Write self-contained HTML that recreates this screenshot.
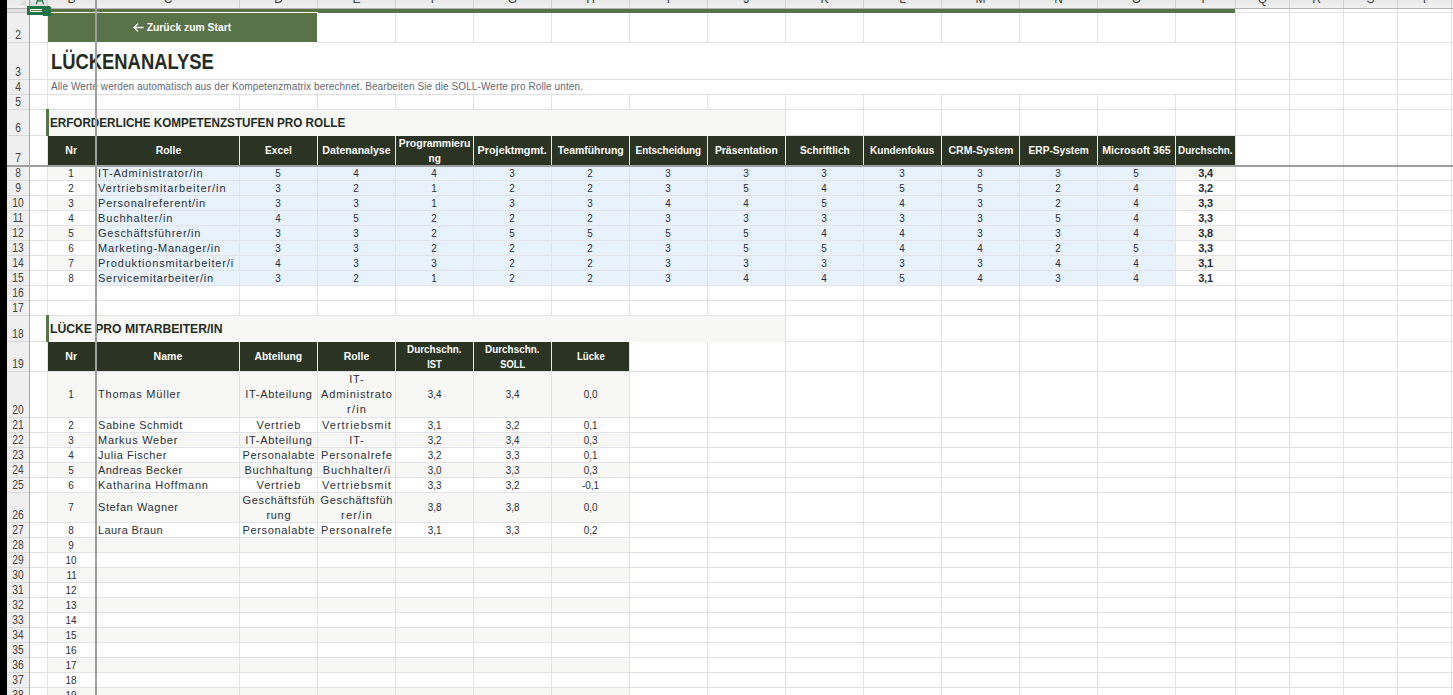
<!DOCTYPE html><html><head><meta charset="utf-8"><title>Lückenanalyse</title><style>
html,body{margin:0;padding:0}
body{width:1453px;height:695px;overflow:hidden;background:#fff;position:relative;font-family:"Liberation Sans",sans-serif}
div{position:absolute;box-sizing:border-box}
.c{display:flex;align-items:center;justify-content:center;overflow:hidden;text-align:center;background:none;white-space:nowrap}
.c p{margin:0;padding:0}
.sx{display:inline-block}
.h{color:#fff;font-weight:bold;font-size:11px;line-height:15px}
.h p{margin-top:-1px}
.h.h2 p{margin-top:0}
.d{color:#2a2f3a;font-size:11px;line-height:15px;letter-spacing:0.7px}
.d.n{letter-spacing:0}
.d.n p{transform:scaleX(0.9)}
.d.l{justify-content:flex-start;text-align:left;padding-left:1px}
.d.b{font-weight:bold;letter-spacing:-0.2px}
.title{justify-content:flex-start;font-weight:bold;font-size:21.5px;color:#252c1f;padding-left:3px;line-height:24px}
.title p{margin-top:1px}
.sub{justify-content:flex-start;font-size:10px;color:#626879;padding-left:3px}
.sub p{margin-top:-1px}
.sec{justify-content:flex-start;font-weight:bold;font-size:12.5px;color:#252c1f;padding-left:1px}
.sec p{margin-top:1px}
.btn{color:#fff;font-weight:bold;font-size:11px}
.btn p{margin-top:-2px;margin-left:-1px}
.cl{top:-8.7px;height:16px;font-size:12px;line-height:16px;text-align:center}
.rl{left:7px;width:22px;height:14px;font-size:12.5px;line-height:14px;text-align:center;color:#444;transform:scaleX(0.82)}
.arr{display:inline-block;vertical-align:-1px;margin-right:3px}
</style></head><body>
<div style="left:47px;top:9px;width:1px;height:686px;background:#e0e0e0;"></div>
<div style="left:239px;top:9px;width:1px;height:686px;background:#e0e0e0;"></div>
<div style="left:317px;top:9px;width:1px;height:686px;background:#e0e0e0;"></div>
<div style="left:395px;top:9px;width:1px;height:686px;background:#e0e0e0;"></div>
<div style="left:473px;top:9px;width:1px;height:686px;background:#e0e0e0;"></div>
<div style="left:551px;top:9px;width:1px;height:686px;background:#e0e0e0;"></div>
<div style="left:629px;top:9px;width:1px;height:686px;background:#e0e0e0;"></div>
<div style="left:707px;top:9px;width:1px;height:686px;background:#e0e0e0;"></div>
<div style="left:785px;top:9px;width:1px;height:686px;background:#e0e0e0;"></div>
<div style="left:863px;top:9px;width:1px;height:686px;background:#e0e0e0;"></div>
<div style="left:941px;top:9px;width:1px;height:686px;background:#e0e0e0;"></div>
<div style="left:1019px;top:9px;width:1px;height:686px;background:#e0e0e0;"></div>
<div style="left:1097px;top:9px;width:1px;height:686px;background:#e0e0e0;"></div>
<div style="left:1175px;top:9px;width:1px;height:686px;background:#e0e0e0;"></div>
<div style="left:1235px;top:9px;width:1px;height:686px;background:#e0e0e0;"></div>
<div style="left:1289px;top:9px;width:1px;height:686px;background:#e0e0e0;"></div>
<div style="left:1343px;top:9px;width:1px;height:686px;background:#e0e0e0;"></div>
<div style="left:1397px;top:9px;width:1px;height:686px;background:#e0e0e0;"></div>
<div style="left:1451px;top:9px;width:1px;height:686px;background:#e0e0e0;"></div>
<div style="left:30px;top:12px;width:1423px;height:1px;background:#e0e0e0;"></div>
<div style="left:30px;top:42px;width:1423px;height:1px;background:#e0e0e0;"></div>
<div style="left:30px;top:79px;width:1423px;height:1px;background:#e0e0e0;"></div>
<div style="left:30px;top:94px;width:1423px;height:1px;background:#e0e0e0;"></div>
<div style="left:30px;top:109px;width:1423px;height:1px;background:#e0e0e0;"></div>
<div style="left:30px;top:135px;width:1423px;height:1px;background:#e0e0e0;"></div>
<div style="left:30px;top:180px;width:1423px;height:1px;background:#e0e0e0;"></div>
<div style="left:30px;top:195px;width:1423px;height:1px;background:#e0e0e0;"></div>
<div style="left:30px;top:210px;width:1423px;height:1px;background:#e0e0e0;"></div>
<div style="left:30px;top:225px;width:1423px;height:1px;background:#e0e0e0;"></div>
<div style="left:30px;top:240px;width:1423px;height:1px;background:#e0e0e0;"></div>
<div style="left:30px;top:255px;width:1423px;height:1px;background:#e0e0e0;"></div>
<div style="left:30px;top:270px;width:1423px;height:1px;background:#e0e0e0;"></div>
<div style="left:30px;top:285px;width:1423px;height:1px;background:#e0e0e0;"></div>
<div style="left:30px;top:300px;width:1423px;height:1px;background:#e0e0e0;"></div>
<div style="left:30px;top:315px;width:1423px;height:1px;background:#e0e0e0;"></div>
<div style="left:30px;top:341px;width:1423px;height:1px;background:#e0e0e0;"></div>
<div style="left:30px;top:371px;width:1423px;height:1px;background:#e0e0e0;"></div>
<div style="left:30px;top:417px;width:1423px;height:1px;background:#e0e0e0;"></div>
<div style="left:30px;top:432px;width:1423px;height:1px;background:#e0e0e0;"></div>
<div style="left:30px;top:447px;width:1423px;height:1px;background:#e0e0e0;"></div>
<div style="left:30px;top:462px;width:1423px;height:1px;background:#e0e0e0;"></div>
<div style="left:30px;top:477px;width:1423px;height:1px;background:#e0e0e0;"></div>
<div style="left:30px;top:492px;width:1423px;height:1px;background:#e0e0e0;"></div>
<div style="left:30px;top:522px;width:1423px;height:1px;background:#e0e0e0;"></div>
<div style="left:30px;top:537px;width:1423px;height:1px;background:#e0e0e0;"></div>
<div style="left:30px;top:552px;width:1423px;height:1px;background:#e0e0e0;"></div>
<div style="left:30px;top:567px;width:1423px;height:1px;background:#e0e0e0;"></div>
<div style="left:30px;top:582px;width:1423px;height:1px;background:#e0e0e0;"></div>
<div style="left:30px;top:597px;width:1423px;height:1px;background:#e0e0e0;"></div>
<div style="left:30px;top:612px;width:1423px;height:1px;background:#e0e0e0;"></div>
<div style="left:30px;top:627px;width:1423px;height:1px;background:#e0e0e0;"></div>
<div style="left:30px;top:642px;width:1423px;height:1px;background:#e0e0e0;"></div>
<div style="left:30px;top:657px;width:1423px;height:1px;background:#e0e0e0;"></div>
<div style="left:30px;top:672px;width:1423px;height:1px;background:#e0e0e0;"></div>
<div style="left:30px;top:687px;width:1423px;height:1px;background:#e0e0e0;"></div>
<div style="left:30px;top:702px;width:1423px;height:1px;background:#e0e0e0;"></div>
<div style="left:48px;top:43px;width:1187px;height:36px;background:#fff;"></div>
<div style="left:48px;top:80px;width:1187px;height:14px;background:#fff;"></div>
<div style="left:48px;top:9px;width:1187px;height:4px;background:#5a7247;"></div>
<div style="left:48px;top:12px;width:270px;height:1px;background:#fcfcfc;"></div>
<div style="left:317px;top:12px;width:1px;height:31px;background:#f8f8f8;"></div>
<div style="left:48px;top:42px;width:269px;height:1px;background:#fcfcfc;"></div>
<div style="left:48px;top:13px;width:269px;height:29px;background:#5a7247;"></div>
<div style="left:46px;top:109px;width:3px;height:27px;background:#5a7247;"></div>
<div style="left:49px;top:110px;width:736px;height:26px;background:#f7f7f5;"></div>
<div style="left:46px;top:315px;width:3px;height:27px;background:#5a7247;"></div>
<div style="left:49px;top:316px;width:736px;height:26px;background:#f7f7f5;"></div>
<div style="left:48px;top:136px;width:1187px;height:29px;background:#2b3423;"></div>
<div class="c h" style="left:48px;top:136px;width:47px;height:29px;"><p><span class="sx" style="transform:scaleX(0.9645);margin:0 -0.22px">Nr</span></p></div>
<div style="left:239px;top:136px;width:1px;height:29px;background:#e6e8e4;"></div>
<div class="c h" style="left:97px;top:136px;width:142px;height:29px;"><p><span class="sx" style="transform:scaleX(0.9477);margin:0 -0.70px">Rolle</span></p></div>
<div style="left:317px;top:136px;width:1px;height:29px;background:#e6e8e4;"></div>
<div class="c h" style="left:240px;top:136px;width:77px;height:29px;"><p><span class="sx" style="transform:scaleX(0.9287);margin:0 -1.03px">Excel</span></p></div>
<div style="left:395px;top:136px;width:1px;height:29px;background:#e6e8e4;"></div>
<div class="c h" style="left:318px;top:136px;width:77px;height:29px;"><p><span class="sx" style="transform:scaleX(0.9614);margin:0 -1.37px">Datenanalyse</span></p></div>
<div style="left:473px;top:136px;width:1px;height:29px;background:#e6e8e4;"></div>
<div class="c h h2" style="left:396px;top:136px;width:77px;height:29px;"><p><span class="sx" style="transform:scaleX(0.9521);margin:0 -1.80px">Programmieru</span><br><span class="sx" style="transform:scaleX(0.9143);margin:0 -0.58px">ng</span></p></div>
<div style="left:551px;top:136px;width:1px;height:29px;background:#e6e8e4;"></div>
<div class="c h" style="left:474px;top:136px;width:77px;height:29px;"><p><span class="sx" style="transform:scaleX(0.9830);margin:0 -0.60px">Projektmgmt.</span></p></div>
<div style="left:629px;top:136px;width:1px;height:29px;background:#e6e8e4;"></div>
<div class="c h" style="left:552px;top:136px;width:77px;height:29px;"><p><span class="sx" style="transform:scaleX(0.9501);margin:0 -1.73px">Teamführung</span></p></div>
<div style="left:707px;top:136px;width:1px;height:29px;background:#e6e8e4;"></div>
<div class="c h" style="left:630px;top:136px;width:77px;height:29px;"><p><span class="sx" style="transform:scaleX(0.9005);margin:0 -3.62px">Entscheidung</span></p></div>
<div style="left:785px;top:136px;width:1px;height:29px;background:#e6e8e4;"></div>
<div class="c h" style="left:708px;top:136px;width:77px;height:29px;"><p><span class="sx" style="transform:scaleX(0.9424);margin:0 -1.92px">Präsentation</span></p></div>
<div style="left:863px;top:136px;width:1px;height:29px;background:#e6e8e4;"></div>
<div class="c h" style="left:786px;top:136px;width:77px;height:29px;"><p><span class="sx" style="transform:scaleX(0.9238);margin:0 -2.05px">Schriftlich</span></p></div>
<div style="left:941px;top:136px;width:1px;height:29px;background:#e6e8e4;"></div>
<div class="c h" style="left:864px;top:136px;width:77px;height:29px;"><p><span class="sx" style="transform:scaleX(0.9135);margin:0 -3.04px">Kundenfokus</span></p></div>
<div style="left:1019px;top:136px;width:1px;height:29px;background:#e6e8e4;"></div>
<div class="c h" style="left:942px;top:136px;width:77px;height:29px;"><p><span class="sx" style="transform:scaleX(0.9564);margin:0 -1.48px">CRM-System</span></p></div>
<div style="left:1097px;top:136px;width:1px;height:29px;background:#e6e8e4;"></div>
<div class="c h" style="left:1020px;top:136px;width:77px;height:29px;"><p><span class="sx" style="transform:scaleX(0.9217);margin:0 -2.56px">ERP-System</span></p></div>
<div style="left:1175px;top:136px;width:1px;height:29px;background:#e6e8e4;"></div>
<div class="c h" style="left:1098px;top:136px;width:77px;height:29px;"><p><span class="sx" style="transform:scaleX(0.9659);margin:0 -1.21px">Microsoft 365</span></p></div>
<div class="c h" style="left:1176px;top:136px;width:59px;height:29px;"><p><span class="sx" style="transform:scaleX(0.8989);margin:0 -3.06px">Durchschn.</span></p></div>
<div style="left:48px;top:342px;width:581px;height:29px;background:#2b3423;"></div>
<div class="c h" style="left:48px;top:342px;width:47px;height:29px;"><p><span class="sx" style="transform:scaleX(0.9645);margin:0 -0.22px">Nr</span></p></div>
<div style="left:239px;top:342px;width:1px;height:29px;background:#e6e8e4;"></div>
<div class="c h" style="left:97px;top:342px;width:142px;height:29px;"><p><span class="sx" style="transform:scaleX(0.9610);margin:0 -0.58px">Name</span></p></div>
<div style="left:317px;top:342px;width:1px;height:29px;background:#e6e8e4;"></div>
<div class="c h" style="left:240px;top:342px;width:77px;height:29px;"><p><span class="sx" style="transform:scaleX(0.9385);margin:0 -1.56px">Abteilung</span></p></div>
<div style="left:395px;top:342px;width:1px;height:29px;background:#e6e8e4;"></div>
<div class="c h" style="left:318px;top:342px;width:77px;height:29px;"><p><span class="sx" style="transform:scaleX(0.9477);margin:0 -0.70px">Rolle</span></p></div>
<div style="left:473px;top:342px;width:1px;height:29px;background:#e6e8e4;"></div>
<div class="c h h2" style="left:396px;top:342px;width:77px;height:29px;"><p><span class="sx" style="transform:scaleX(0.8989);margin:0 -3.06px">Durchschn.</span><br><span class="sx" style="transform:scaleX(0.8526);margin:0 -1.26px">IST</span></p></div>
<div style="left:551px;top:342px;width:1px;height:29px;background:#e6e8e4;"></div>
<div class="c h h2" style="left:474px;top:342px;width:77px;height:29px;"><p><span class="sx" style="transform:scaleX(0.8989);margin:0 -3.06px">Durchschn.</span><br><span class="sx" style="transform:scaleX(0.8452);margin:0 -2.27px">SOLL</span></p></div>
<div class="c h" style="left:552px;top:342px;width:77px;height:29px;"><p><span class="sx" style="transform:scaleX(0.8743);margin:0 -2.00px">Lücke</span></p></div>
<div style="left:48px;top:167px;width:47px;height:13px;background:#f7f7f5;"></div>
<div class="c d n" style="left:48px;top:167px;width:47px;height:13px;"><p><span>1</span></p></div>
<div style="left:97px;top:167px;width:1078px;height:13px;background:#e8f2fd;"></div>
<div class="c d l" style="left:97px;top:167px;width:142px;height:13px;"><p><span style="letter-spacing:0.858px;margin-right:-0.858px">IT-Administrator/in</span></p></div>
<div class="c d n" style="left:240px;top:167px;width:77px;height:13px;"><p><span>5</span></p></div>
<div class="c d n" style="left:318px;top:167px;width:77px;height:13px;"><p><span>4</span></p></div>
<div class="c d n" style="left:396px;top:167px;width:77px;height:13px;"><p><span>4</span></p></div>
<div class="c d n" style="left:474px;top:167px;width:77px;height:13px;"><p><span>3</span></p></div>
<div class="c d n" style="left:552px;top:167px;width:77px;height:13px;"><p><span>2</span></p></div>
<div class="c d n" style="left:630px;top:167px;width:77px;height:13px;"><p><span>3</span></p></div>
<div class="c d n" style="left:708px;top:167px;width:77px;height:13px;"><p><span>3</span></p></div>
<div class="c d n" style="left:786px;top:167px;width:77px;height:13px;"><p><span>3</span></p></div>
<div class="c d n" style="left:864px;top:167px;width:77px;height:13px;"><p><span>3</span></p></div>
<div class="c d n" style="left:942px;top:167px;width:77px;height:13px;"><p><span>3</span></p></div>
<div class="c d n" style="left:1020px;top:167px;width:77px;height:13px;"><p><span>3</span></p></div>
<div class="c d n" style="left:1098px;top:167px;width:77px;height:13px;"><p><span>5</span></p></div>
<div style="left:1176px;top:167px;width:59px;height:13px;background:#f7f7f5;"></div>
<div class="c d b" style="left:1176px;top:167px;width:59px;height:13px;"><p><span>3,4</span></p></div>
<div style="left:48px;top:181px;width:47px;height:14px;background:#fff;"></div>
<div class="c d n" style="left:48px;top:181px;width:47px;height:14px;"><p><span>2</span></p></div>
<div style="left:97px;top:181px;width:1078px;height:14px;background:#e8f2fd;"></div>
<div class="c d l" style="left:97px;top:181px;width:142px;height:14px;"><p><span style="letter-spacing:0.936px;margin-right:-0.936px">Vertriebsmitarbeiter/in</span></p></div>
<div class="c d n" style="left:240px;top:181px;width:77px;height:14px;"><p><span>3</span></p></div>
<div class="c d n" style="left:318px;top:181px;width:77px;height:14px;"><p><span>2</span></p></div>
<div class="c d n" style="left:396px;top:181px;width:77px;height:14px;"><p><span>1</span></p></div>
<div class="c d n" style="left:474px;top:181px;width:77px;height:14px;"><p><span>2</span></p></div>
<div class="c d n" style="left:552px;top:181px;width:77px;height:14px;"><p><span>2</span></p></div>
<div class="c d n" style="left:630px;top:181px;width:77px;height:14px;"><p><span>3</span></p></div>
<div class="c d n" style="left:708px;top:181px;width:77px;height:14px;"><p><span>5</span></p></div>
<div class="c d n" style="left:786px;top:181px;width:77px;height:14px;"><p><span>4</span></p></div>
<div class="c d n" style="left:864px;top:181px;width:77px;height:14px;"><p><span>5</span></p></div>
<div class="c d n" style="left:942px;top:181px;width:77px;height:14px;"><p><span>5</span></p></div>
<div class="c d n" style="left:1020px;top:181px;width:77px;height:14px;"><p><span>2</span></p></div>
<div class="c d n" style="left:1098px;top:181px;width:77px;height:14px;"><p><span>4</span></p></div>
<div style="left:1176px;top:181px;width:59px;height:14px;background:#fff;"></div>
<div class="c d b" style="left:1176px;top:181px;width:59px;height:14px;"><p><span>3,2</span></p></div>
<div style="left:48px;top:196px;width:47px;height:14px;background:#f7f7f5;"></div>
<div class="c d n" style="left:48px;top:196px;width:47px;height:14px;"><p><span>3</span></p></div>
<div style="left:97px;top:196px;width:1078px;height:14px;background:#e8f2fd;"></div>
<div class="c d l" style="left:97px;top:196px;width:142px;height:14px;"><p><span style="letter-spacing:0.791px;margin-right:-0.791px">Personalreferent/in</span></p></div>
<div class="c d n" style="left:240px;top:196px;width:77px;height:14px;"><p><span>3</span></p></div>
<div class="c d n" style="left:318px;top:196px;width:77px;height:14px;"><p><span>3</span></p></div>
<div class="c d n" style="left:396px;top:196px;width:77px;height:14px;"><p><span>1</span></p></div>
<div class="c d n" style="left:474px;top:196px;width:77px;height:14px;"><p><span>3</span></p></div>
<div class="c d n" style="left:552px;top:196px;width:77px;height:14px;"><p><span>3</span></p></div>
<div class="c d n" style="left:630px;top:196px;width:77px;height:14px;"><p><span>4</span></p></div>
<div class="c d n" style="left:708px;top:196px;width:77px;height:14px;"><p><span>4</span></p></div>
<div class="c d n" style="left:786px;top:196px;width:77px;height:14px;"><p><span>5</span></p></div>
<div class="c d n" style="left:864px;top:196px;width:77px;height:14px;"><p><span>4</span></p></div>
<div class="c d n" style="left:942px;top:196px;width:77px;height:14px;"><p><span>3</span></p></div>
<div class="c d n" style="left:1020px;top:196px;width:77px;height:14px;"><p><span>2</span></p></div>
<div class="c d n" style="left:1098px;top:196px;width:77px;height:14px;"><p><span>4</span></p></div>
<div style="left:1176px;top:196px;width:59px;height:14px;background:#f7f7f5;"></div>
<div class="c d b" style="left:1176px;top:196px;width:59px;height:14px;"><p><span>3,3</span></p></div>
<div style="left:48px;top:211px;width:47px;height:14px;background:#fff;"></div>
<div class="c d n" style="left:48px;top:211px;width:47px;height:14px;"><p><span>4</span></p></div>
<div style="left:97px;top:211px;width:1078px;height:14px;background:#e8f2fd;"></div>
<div class="c d l" style="left:97px;top:211px;width:142px;height:14px;"><p><span style="letter-spacing:0.848px;margin-right:-0.848px">Buchhalter/in</span></p></div>
<div class="c d n" style="left:240px;top:211px;width:77px;height:14px;"><p><span>4</span></p></div>
<div class="c d n" style="left:318px;top:211px;width:77px;height:14px;"><p><span>5</span></p></div>
<div class="c d n" style="left:396px;top:211px;width:77px;height:14px;"><p><span>2</span></p></div>
<div class="c d n" style="left:474px;top:211px;width:77px;height:14px;"><p><span>2</span></p></div>
<div class="c d n" style="left:552px;top:211px;width:77px;height:14px;"><p><span>2</span></p></div>
<div class="c d n" style="left:630px;top:211px;width:77px;height:14px;"><p><span>3</span></p></div>
<div class="c d n" style="left:708px;top:211px;width:77px;height:14px;"><p><span>3</span></p></div>
<div class="c d n" style="left:786px;top:211px;width:77px;height:14px;"><p><span>3</span></p></div>
<div class="c d n" style="left:864px;top:211px;width:77px;height:14px;"><p><span>3</span></p></div>
<div class="c d n" style="left:942px;top:211px;width:77px;height:14px;"><p><span>3</span></p></div>
<div class="c d n" style="left:1020px;top:211px;width:77px;height:14px;"><p><span>5</span></p></div>
<div class="c d n" style="left:1098px;top:211px;width:77px;height:14px;"><p><span>4</span></p></div>
<div style="left:1176px;top:211px;width:59px;height:14px;background:#fff;"></div>
<div class="c d b" style="left:1176px;top:211px;width:59px;height:14px;"><p><span>3,3</span></p></div>
<div style="left:48px;top:226px;width:47px;height:14px;background:#f7f7f5;"></div>
<div class="c d n" style="left:48px;top:226px;width:47px;height:14px;"><p><span>5</span></p></div>
<div style="left:97px;top:226px;width:1078px;height:14px;background:#e8f2fd;"></div>
<div class="c d l" style="left:97px;top:226px;width:142px;height:14px;"><p><span style="letter-spacing:0.737px;margin-right:-0.737px">Geschäftsführer/in</span></p></div>
<div class="c d n" style="left:240px;top:226px;width:77px;height:14px;"><p><span>3</span></p></div>
<div class="c d n" style="left:318px;top:226px;width:77px;height:14px;"><p><span>3</span></p></div>
<div class="c d n" style="left:396px;top:226px;width:77px;height:14px;"><p><span>2</span></p></div>
<div class="c d n" style="left:474px;top:226px;width:77px;height:14px;"><p><span>5</span></p></div>
<div class="c d n" style="left:552px;top:226px;width:77px;height:14px;"><p><span>5</span></p></div>
<div class="c d n" style="left:630px;top:226px;width:77px;height:14px;"><p><span>5</span></p></div>
<div class="c d n" style="left:708px;top:226px;width:77px;height:14px;"><p><span>5</span></p></div>
<div class="c d n" style="left:786px;top:226px;width:77px;height:14px;"><p><span>4</span></p></div>
<div class="c d n" style="left:864px;top:226px;width:77px;height:14px;"><p><span>4</span></p></div>
<div class="c d n" style="left:942px;top:226px;width:77px;height:14px;"><p><span>3</span></p></div>
<div class="c d n" style="left:1020px;top:226px;width:77px;height:14px;"><p><span>3</span></p></div>
<div class="c d n" style="left:1098px;top:226px;width:77px;height:14px;"><p><span>4</span></p></div>
<div style="left:1176px;top:226px;width:59px;height:14px;background:#f7f7f5;"></div>
<div class="c d b" style="left:1176px;top:226px;width:59px;height:14px;"><p><span>3,8</span></p></div>
<div style="left:48px;top:241px;width:47px;height:14px;background:#fff;"></div>
<div class="c d n" style="left:48px;top:241px;width:47px;height:14px;"><p><span>6</span></p></div>
<div style="left:97px;top:241px;width:1078px;height:14px;background:#e8f2fd;"></div>
<div class="c d l" style="left:97px;top:241px;width:142px;height:14px;"><p><span style="letter-spacing:0.800px;margin-right:-0.800px">Marketing-Manager/in</span></p></div>
<div class="c d n" style="left:240px;top:241px;width:77px;height:14px;"><p><span>3</span></p></div>
<div class="c d n" style="left:318px;top:241px;width:77px;height:14px;"><p><span>3</span></p></div>
<div class="c d n" style="left:396px;top:241px;width:77px;height:14px;"><p><span>2</span></p></div>
<div class="c d n" style="left:474px;top:241px;width:77px;height:14px;"><p><span>2</span></p></div>
<div class="c d n" style="left:552px;top:241px;width:77px;height:14px;"><p><span>2</span></p></div>
<div class="c d n" style="left:630px;top:241px;width:77px;height:14px;"><p><span>3</span></p></div>
<div class="c d n" style="left:708px;top:241px;width:77px;height:14px;"><p><span>5</span></p></div>
<div class="c d n" style="left:786px;top:241px;width:77px;height:14px;"><p><span>5</span></p></div>
<div class="c d n" style="left:864px;top:241px;width:77px;height:14px;"><p><span>4</span></p></div>
<div class="c d n" style="left:942px;top:241px;width:77px;height:14px;"><p><span>4</span></p></div>
<div class="c d n" style="left:1020px;top:241px;width:77px;height:14px;"><p><span>2</span></p></div>
<div class="c d n" style="left:1098px;top:241px;width:77px;height:14px;"><p><span>5</span></p></div>
<div style="left:1176px;top:241px;width:59px;height:14px;background:#fff;"></div>
<div class="c d b" style="left:1176px;top:241px;width:59px;height:14px;"><p><span>3,3</span></p></div>
<div style="left:48px;top:256px;width:47px;height:14px;background:#f7f7f5;"></div>
<div class="c d n" style="left:48px;top:256px;width:47px;height:14px;"><p><span>7</span></p></div>
<div style="left:97px;top:256px;width:1078px;height:14px;background:#e8f2fd;"></div>
<div class="c d l" style="left:97px;top:256px;width:142px;height:14px;"><p><span style="letter-spacing:0.854px;margin-right:-0.854px">Produktionsmitarbeiter/i</span></p></div>
<div class="c d n" style="left:240px;top:256px;width:77px;height:14px;"><p><span>4</span></p></div>
<div class="c d n" style="left:318px;top:256px;width:77px;height:14px;"><p><span>3</span></p></div>
<div class="c d n" style="left:396px;top:256px;width:77px;height:14px;"><p><span>3</span></p></div>
<div class="c d n" style="left:474px;top:256px;width:77px;height:14px;"><p><span>2</span></p></div>
<div class="c d n" style="left:552px;top:256px;width:77px;height:14px;"><p><span>2</span></p></div>
<div class="c d n" style="left:630px;top:256px;width:77px;height:14px;"><p><span>3</span></p></div>
<div class="c d n" style="left:708px;top:256px;width:77px;height:14px;"><p><span>3</span></p></div>
<div class="c d n" style="left:786px;top:256px;width:77px;height:14px;"><p><span>3</span></p></div>
<div class="c d n" style="left:864px;top:256px;width:77px;height:14px;"><p><span>3</span></p></div>
<div class="c d n" style="left:942px;top:256px;width:77px;height:14px;"><p><span>3</span></p></div>
<div class="c d n" style="left:1020px;top:256px;width:77px;height:14px;"><p><span>4</span></p></div>
<div class="c d n" style="left:1098px;top:256px;width:77px;height:14px;"><p><span>4</span></p></div>
<div style="left:1176px;top:256px;width:59px;height:14px;background:#f7f7f5;"></div>
<div class="c d b" style="left:1176px;top:256px;width:59px;height:14px;"><p><span>3,1</span></p></div>
<div style="left:48px;top:271px;width:47px;height:14px;background:#fff;"></div>
<div class="c d n" style="left:48px;top:271px;width:47px;height:14px;"><p><span>8</span></p></div>
<div style="left:97px;top:271px;width:1078px;height:14px;background:#e8f2fd;"></div>
<div class="c d l" style="left:97px;top:271px;width:142px;height:14px;"><p><span style="letter-spacing:0.737px;margin-right:-0.737px">Servicemitarbeiter/in</span></p></div>
<div class="c d n" style="left:240px;top:271px;width:77px;height:14px;"><p><span>3</span></p></div>
<div class="c d n" style="left:318px;top:271px;width:77px;height:14px;"><p><span>2</span></p></div>
<div class="c d n" style="left:396px;top:271px;width:77px;height:14px;"><p><span>1</span></p></div>
<div class="c d n" style="left:474px;top:271px;width:77px;height:14px;"><p><span>2</span></p></div>
<div class="c d n" style="left:552px;top:271px;width:77px;height:14px;"><p><span>2</span></p></div>
<div class="c d n" style="left:630px;top:271px;width:77px;height:14px;"><p><span>3</span></p></div>
<div class="c d n" style="left:708px;top:271px;width:77px;height:14px;"><p><span>4</span></p></div>
<div class="c d n" style="left:786px;top:271px;width:77px;height:14px;"><p><span>4</span></p></div>
<div class="c d n" style="left:864px;top:271px;width:77px;height:14px;"><p><span>5</span></p></div>
<div class="c d n" style="left:942px;top:271px;width:77px;height:14px;"><p><span>4</span></p></div>
<div class="c d n" style="left:1020px;top:271px;width:77px;height:14px;"><p><span>3</span></p></div>
<div class="c d n" style="left:1098px;top:271px;width:77px;height:14px;"><p><span>4</span></p></div>
<div style="left:1176px;top:271px;width:59px;height:14px;background:#fff;"></div>
<div class="c d b" style="left:1176px;top:271px;width:59px;height:14px;"><p><span>3,1</span></p></div>
<div style="left:48px;top:180px;width:47px;height:1px;background:#e2e2e8;"></div>
<div style="left:97px;top:180px;width:1138px;height:1px;background:#e2e2e8;"></div>
<div style="left:48px;top:195px;width:47px;height:1px;background:#e2e2e8;"></div>
<div style="left:97px;top:195px;width:1138px;height:1px;background:#e2e2e8;"></div>
<div style="left:48px;top:210px;width:47px;height:1px;background:#e2e2e8;"></div>
<div style="left:97px;top:210px;width:1138px;height:1px;background:#e2e2e8;"></div>
<div style="left:48px;top:225px;width:47px;height:1px;background:#e2e2e8;"></div>
<div style="left:97px;top:225px;width:1138px;height:1px;background:#e2e2e8;"></div>
<div style="left:48px;top:240px;width:47px;height:1px;background:#e2e2e8;"></div>
<div style="left:97px;top:240px;width:1138px;height:1px;background:#e2e2e8;"></div>
<div style="left:48px;top:255px;width:47px;height:1px;background:#e2e2e8;"></div>
<div style="left:97px;top:255px;width:1138px;height:1px;background:#e2e2e8;"></div>
<div style="left:48px;top:270px;width:47px;height:1px;background:#e2e2e8;"></div>
<div style="left:97px;top:270px;width:1138px;height:1px;background:#e2e2e8;"></div>
<div style="left:48px;top:285px;width:47px;height:1px;background:#e2e2e8;"></div>
<div style="left:97px;top:285px;width:1138px;height:1px;background:#e2e2e8;"></div>
<div style="left:239px;top:167px;width:1px;height:119px;background:#e2e2e8;"></div>
<div style="left:317px;top:167px;width:1px;height:119px;background:#e2e2e8;"></div>
<div style="left:395px;top:167px;width:1px;height:119px;background:#e2e2e8;"></div>
<div style="left:473px;top:167px;width:1px;height:119px;background:#e2e2e8;"></div>
<div style="left:551px;top:167px;width:1px;height:119px;background:#e2e2e8;"></div>
<div style="left:629px;top:167px;width:1px;height:119px;background:#e2e2e8;"></div>
<div style="left:707px;top:167px;width:1px;height:119px;background:#e2e2e8;"></div>
<div style="left:785px;top:167px;width:1px;height:119px;background:#e2e2e8;"></div>
<div style="left:863px;top:167px;width:1px;height:119px;background:#e2e2e8;"></div>
<div style="left:941px;top:167px;width:1px;height:119px;background:#e2e2e8;"></div>
<div style="left:1019px;top:167px;width:1px;height:119px;background:#e2e2e8;"></div>
<div style="left:1097px;top:167px;width:1px;height:119px;background:#e2e2e8;"></div>
<div style="left:1175px;top:167px;width:1px;height:119px;background:#e2e2e8;"></div>
<div style="left:1235px;top:167px;width:1px;height:119px;background:#e2e2e8;"></div>
<div style="left:47px;top:167px;width:1px;height:119px;background:#e2e2e8;"></div>
<div style="left:48px;top:372px;width:47px;height:45px;background:#f7f7f5;"></div>
<div style="left:97px;top:372px;width:532px;height:45px;background:#f7f7f5;"></div>
<div class="c d n" style="left:48px;top:372px;width:47px;height:45px;"><p><span>1</span></p></div>
<div class="c d l" style="left:97px;top:372px;width:142px;height:45px;"><p><span style="letter-spacing:0.787px;margin-right:-0.787px">Thomas Müller</span></p></div>
<div class="c d w" style="left:240px;top:372px;width:77px;height:45px;"><p><span style="letter-spacing:0.727px;margin-right:-0.727px">IT-Abteilung</span></p></div>
<div class="c d w" style="left:318px;top:372px;width:77px;height:45px;"><p><span style="letter-spacing:0.778px;margin-right:-0.778px">IT-</span><br><span style="letter-spacing:0.878px;margin-right:-0.878px">Administrato</span><br><span style="letter-spacing:1.200px;margin-right:-1.200px">r/in</span></p></div>
<div class="c d n" style="left:396px;top:372px;width:77px;height:45px;"><p><span>3,4</span></p></div>
<div class="c d n" style="left:474px;top:372px;width:77px;height:45px;"><p><span>3,4</span></p></div>
<div class="c d n" style="left:552px;top:372px;width:77px;height:45px;"><p><span>0,0</span></p></div>
<div style="left:48px;top:417px;width:47px;height:1px;background:#e2e2e8;"></div>
<div style="left:97px;top:417px;width:533px;height:1px;background:#e2e2e8;"></div>
<div class="c d n" style="left:48px;top:418px;width:47px;height:14px;"><p><span>2</span></p></div>
<div class="c d l" style="left:97px;top:418px;width:142px;height:14px;"><p><span style="letter-spacing:0.550px;margin-right:-0.550px">Sabine Schmidt</span></p></div>
<div class="c d w" style="left:240px;top:418px;width:77px;height:14px;"><p><span style="letter-spacing:0.854px;margin-right:-0.854px">Vertrieb</span></p></div>
<div class="c d w" style="left:318px;top:418px;width:77px;height:14px;"><p><span style="letter-spacing:0.975px;margin-right:-0.975px">Vertriebsmit</span></p></div>
<div class="c d n" style="left:396px;top:418px;width:77px;height:14px;"><p><span>3,1</span></p></div>
<div class="c d n" style="left:474px;top:418px;width:77px;height:14px;"><p><span>3,2</span></p></div>
<div class="c d n" style="left:552px;top:418px;width:77px;height:14px;"><p><span>0,1</span></p></div>
<div style="left:48px;top:432px;width:47px;height:1px;background:#e2e2e8;"></div>
<div style="left:97px;top:432px;width:533px;height:1px;background:#e2e2e8;"></div>
<div style="left:48px;top:433px;width:47px;height:14px;background:#f7f7f5;"></div>
<div style="left:97px;top:433px;width:532px;height:14px;background:#f7f7f5;"></div>
<div class="c d n" style="left:48px;top:433px;width:47px;height:14px;"><p><span>3</span></p></div>
<div class="c d l" style="left:97px;top:433px;width:142px;height:14px;"><p><span style="letter-spacing:0.725px;margin-right:-0.725px">Markus Weber</span></p></div>
<div class="c d w" style="left:240px;top:433px;width:77px;height:14px;"><p><span style="letter-spacing:0.727px;margin-right:-0.727px">IT-Abteilung</span></p></div>
<div class="c d w" style="left:318px;top:433px;width:77px;height:14px;"><p><span style="letter-spacing:0.778px;margin-right:-0.778px">IT-</span></p></div>
<div class="c d n" style="left:396px;top:433px;width:77px;height:14px;"><p><span>3,2</span></p></div>
<div class="c d n" style="left:474px;top:433px;width:77px;height:14px;"><p><span>3,4</span></p></div>
<div class="c d n" style="left:552px;top:433px;width:77px;height:14px;"><p><span>0,3</span></p></div>
<div style="left:48px;top:447px;width:47px;height:1px;background:#e2e2e8;"></div>
<div style="left:97px;top:447px;width:533px;height:1px;background:#e2e2e8;"></div>
<div class="c d n" style="left:48px;top:448px;width:47px;height:14px;"><p><span>4</span></p></div>
<div class="c d l" style="left:97px;top:448px;width:142px;height:14px;"><p><span style="letter-spacing:0.546px;margin-right:-0.546px">Julia Fischer</span></p></div>
<div class="c d w" style="left:240px;top:448px;width:77px;height:14px;"><p><span style="letter-spacing:0.661px;margin-right:-0.661px">Personalabte</span></p></div>
<div class="c d w" style="left:318px;top:448px;width:77px;height:14px;"><p><span style="letter-spacing:0.766px;margin-right:-0.766px">Personalrefe</span></p></div>
<div class="c d n" style="left:396px;top:448px;width:77px;height:14px;"><p><span>3,2</span></p></div>
<div class="c d n" style="left:474px;top:448px;width:77px;height:14px;"><p><span>3,3</span></p></div>
<div class="c d n" style="left:552px;top:448px;width:77px;height:14px;"><p><span>0,1</span></p></div>
<div style="left:48px;top:462px;width:47px;height:1px;background:#e2e2e8;"></div>
<div style="left:97px;top:462px;width:533px;height:1px;background:#e2e2e8;"></div>
<div style="left:48px;top:463px;width:47px;height:14px;background:#f7f7f5;"></div>
<div style="left:97px;top:463px;width:532px;height:14px;background:#f7f7f5;"></div>
<div class="c d n" style="left:48px;top:463px;width:47px;height:14px;"><p><span>5</span></p></div>
<div class="c d l" style="left:97px;top:463px;width:142px;height:14px;"><p><span style="letter-spacing:0.456px;margin-right:-0.456px">Andreas Becker</span></p></div>
<div class="c d w" style="left:240px;top:463px;width:77px;height:14px;"><p><span style="letter-spacing:0.673px;margin-right:-0.673px">Buchhaltung</span></p></div>
<div class="c d w" style="left:318px;top:463px;width:77px;height:14px;"><p><span style="letter-spacing:0.855px;margin-right:-0.855px">Buchhalter/i</span></p></div>
<div class="c d n" style="left:396px;top:463px;width:77px;height:14px;"><p><span>3,0</span></p></div>
<div class="c d n" style="left:474px;top:463px;width:77px;height:14px;"><p><span>3,3</span></p></div>
<div class="c d n" style="left:552px;top:463px;width:77px;height:14px;"><p><span>0,3</span></p></div>
<div style="left:48px;top:477px;width:47px;height:1px;background:#e2e2e8;"></div>
<div style="left:97px;top:477px;width:533px;height:1px;background:#e2e2e8;"></div>
<div class="c d n" style="left:48px;top:478px;width:47px;height:14px;"><p><span>6</span></p></div>
<div class="c d l" style="left:97px;top:478px;width:142px;height:14px;"><p><span style="letter-spacing:0.721px;margin-right:-0.721px">Katharina Hoffmann</span></p></div>
<div class="c d w" style="left:240px;top:478px;width:77px;height:14px;"><p><span style="letter-spacing:0.854px;margin-right:-0.854px">Vertrieb</span></p></div>
<div class="c d w" style="left:318px;top:478px;width:77px;height:14px;"><p><span style="letter-spacing:0.975px;margin-right:-0.975px">Vertriebsmit</span></p></div>
<div class="c d n" style="left:396px;top:478px;width:77px;height:14px;"><p><span>3,3</span></p></div>
<div class="c d n" style="left:474px;top:478px;width:77px;height:14px;"><p><span>3,2</span></p></div>
<div class="c d n" style="left:552px;top:478px;width:77px;height:14px;"><p><span>-0,1</span></p></div>
<div style="left:48px;top:492px;width:47px;height:1px;background:#e2e2e8;"></div>
<div style="left:97px;top:492px;width:533px;height:1px;background:#e2e2e8;"></div>
<div style="left:48px;top:493px;width:47px;height:29px;background:#f7f7f5;"></div>
<div style="left:97px;top:493px;width:532px;height:29px;background:#f7f7f5;"></div>
<div class="c d n" style="left:48px;top:493px;width:47px;height:29px;"><p><span>7</span></p></div>
<div class="c d l" style="left:97px;top:493px;width:142px;height:29px;"><p><span style="letter-spacing:0.586px;margin-right:-0.586px">Stefan Wagner</span></p></div>
<div class="c d w" style="left:240px;top:493px;width:77px;height:29px;"><p><span style="letter-spacing:0.643px;margin-right:-0.643px">Geschäftsfüh</span><br><span style="letter-spacing:0.690px;margin-right:-0.690px">rung</span></p></div>
<div class="c d w" style="left:318px;top:493px;width:77px;height:29px;"><p><span style="letter-spacing:0.643px;margin-right:-0.643px">Geschäftsfüh</span><br><span style="letter-spacing:1.148px;margin-right:-1.148px">rer/in</span></p></div>
<div class="c d n" style="left:396px;top:493px;width:77px;height:29px;"><p><span>3,8</span></p></div>
<div class="c d n" style="left:474px;top:493px;width:77px;height:29px;"><p><span>3,8</span></p></div>
<div class="c d n" style="left:552px;top:493px;width:77px;height:29px;"><p><span>0,0</span></p></div>
<div style="left:48px;top:522px;width:47px;height:1px;background:#e2e2e8;"></div>
<div style="left:97px;top:522px;width:533px;height:1px;background:#e2e2e8;"></div>
<div class="c d n" style="left:48px;top:523px;width:47px;height:14px;"><p><span>8</span></p></div>
<div class="c d l" style="left:97px;top:523px;width:142px;height:14px;"><p><span style="letter-spacing:0.405px;margin-right:-0.405px">Laura Braun</span></p></div>
<div class="c d w" style="left:240px;top:523px;width:77px;height:14px;"><p><span style="letter-spacing:0.661px;margin-right:-0.661px">Personalabte</span></p></div>
<div class="c d w" style="left:318px;top:523px;width:77px;height:14px;"><p><span style="letter-spacing:0.766px;margin-right:-0.766px">Personalrefe</span></p></div>
<div class="c d n" style="left:396px;top:523px;width:77px;height:14px;"><p><span>3,1</span></p></div>
<div class="c d n" style="left:474px;top:523px;width:77px;height:14px;"><p><span>3,3</span></p></div>
<div class="c d n" style="left:552px;top:523px;width:77px;height:14px;"><p><span>0,2</span></p></div>
<div style="left:48px;top:537px;width:47px;height:1px;background:#e2e2e8;"></div>
<div style="left:97px;top:537px;width:533px;height:1px;background:#e2e2e8;"></div>
<div style="left:48px;top:538px;width:47px;height:14px;background:#f7f7f5;"></div>
<div style="left:97px;top:538px;width:532px;height:14px;background:#f7f7f5;"></div>
<div class="c d n" style="left:48px;top:538px;width:47px;height:14px;"><p><span>9</span></p></div>
<div style="left:48px;top:552px;width:47px;height:1px;background:#e2e2e8;"></div>
<div style="left:97px;top:552px;width:533px;height:1px;background:#e2e2e8;"></div>
<div class="c d n" style="left:48px;top:553px;width:47px;height:14px;"><p><span>10</span></p></div>
<div style="left:48px;top:567px;width:47px;height:1px;background:#e2e2e8;"></div>
<div style="left:97px;top:567px;width:533px;height:1px;background:#e2e2e8;"></div>
<div style="left:48px;top:568px;width:47px;height:14px;background:#f7f7f5;"></div>
<div style="left:97px;top:568px;width:532px;height:14px;background:#f7f7f5;"></div>
<div class="c d n" style="left:48px;top:568px;width:47px;height:14px;"><p><span>11</span></p></div>
<div style="left:48px;top:582px;width:47px;height:1px;background:#e2e2e8;"></div>
<div style="left:97px;top:582px;width:533px;height:1px;background:#e2e2e8;"></div>
<div class="c d n" style="left:48px;top:583px;width:47px;height:14px;"><p><span>12</span></p></div>
<div style="left:48px;top:597px;width:47px;height:1px;background:#e2e2e8;"></div>
<div style="left:97px;top:597px;width:533px;height:1px;background:#e2e2e8;"></div>
<div style="left:48px;top:598px;width:47px;height:14px;background:#f7f7f5;"></div>
<div style="left:97px;top:598px;width:532px;height:14px;background:#f7f7f5;"></div>
<div class="c d n" style="left:48px;top:598px;width:47px;height:14px;"><p><span>13</span></p></div>
<div style="left:48px;top:612px;width:47px;height:1px;background:#e2e2e8;"></div>
<div style="left:97px;top:612px;width:533px;height:1px;background:#e2e2e8;"></div>
<div class="c d n" style="left:48px;top:613px;width:47px;height:14px;"><p><span>14</span></p></div>
<div style="left:48px;top:627px;width:47px;height:1px;background:#e2e2e8;"></div>
<div style="left:97px;top:627px;width:533px;height:1px;background:#e2e2e8;"></div>
<div style="left:48px;top:628px;width:47px;height:14px;background:#f7f7f5;"></div>
<div style="left:97px;top:628px;width:532px;height:14px;background:#f7f7f5;"></div>
<div class="c d n" style="left:48px;top:628px;width:47px;height:14px;"><p><span>15</span></p></div>
<div style="left:48px;top:642px;width:47px;height:1px;background:#e2e2e8;"></div>
<div style="left:97px;top:642px;width:533px;height:1px;background:#e2e2e8;"></div>
<div class="c d n" style="left:48px;top:643px;width:47px;height:14px;"><p><span>16</span></p></div>
<div style="left:48px;top:657px;width:47px;height:1px;background:#e2e2e8;"></div>
<div style="left:97px;top:657px;width:533px;height:1px;background:#e2e2e8;"></div>
<div style="left:48px;top:658px;width:47px;height:14px;background:#f7f7f5;"></div>
<div style="left:97px;top:658px;width:532px;height:14px;background:#f7f7f5;"></div>
<div class="c d n" style="left:48px;top:658px;width:47px;height:14px;"><p><span>17</span></p></div>
<div style="left:48px;top:672px;width:47px;height:1px;background:#e2e2e8;"></div>
<div style="left:97px;top:672px;width:533px;height:1px;background:#e2e2e8;"></div>
<div class="c d n" style="left:48px;top:673px;width:47px;height:14px;"><p><span>18</span></p></div>
<div style="left:48px;top:687px;width:47px;height:1px;background:#e2e2e8;"></div>
<div style="left:97px;top:687px;width:533px;height:1px;background:#e2e2e8;"></div>
<div style="left:48px;top:688px;width:47px;height:14px;background:#f7f7f5;"></div>
<div style="left:97px;top:688px;width:532px;height:14px;background:#f7f7f5;"></div>
<div class="c d n" style="left:48px;top:688px;width:47px;height:14px;"><p><span>19</span></p></div>
<div style="left:48px;top:702px;width:47px;height:1px;background:#e2e2e8;"></div>
<div style="left:97px;top:702px;width:533px;height:1px;background:#e2e2e8;"></div>
<div style="left:239px;top:372px;width:1px;height:323px;background:#e2e2e8;"></div>
<div style="left:317px;top:372px;width:1px;height:323px;background:#e2e2e8;"></div>
<div style="left:395px;top:372px;width:1px;height:323px;background:#e2e2e8;"></div>
<div style="left:473px;top:372px;width:1px;height:323px;background:#e2e2e8;"></div>
<div style="left:551px;top:372px;width:1px;height:323px;background:#e2e2e8;"></div>
<div style="left:629px;top:372px;width:1px;height:323px;background:#e2e2e8;"></div>
<div style="left:47px;top:372px;width:1px;height:323px;background:#e2e2e8;"></div>
<div class="c title" style="left:48px;top:43px;width:600px;height:36px;"><p><span class="sx" style="transform:scaleX(0.8553);transform-origin:left center">LÜCKENANALYSE</span></p></div>
<div class="c sub" style="left:48px;top:80px;width:1187px;height:14px;"><p><span style="letter-spacing:0.099px;margin-right:-0.099px">Alle Werte werden automatisch aus der Kompetenzmatrix berechnet. Bearbeiten Sie die SOLL-Werte pro Rolle unten.</span></p></div>
<div class="c sec" style="left:49px;top:110px;width:736px;height:25px;"><p><span class="sx" style="transform:scaleX(0.9342);transform-origin:left center">ERFORDERLICHE KOMPETENZSTUFEN PRO ROLLE</span></p></div>
<div class="c sec" style="left:49px;top:316px;width:736px;height:25px;"><p><span class="sx" style="transform:scaleX(0.9716);transform-origin:left center">LÜCKE PRO MITARBEITER/IN</span></p></div>
<div class="c btn" style="left:48px;top:13px;width:269px;height:29px;"><p><svg class="arr" width="11" height="9" viewBox="0 0 11 9"><path d="M10.5 4.5H1.2M5 0.6L1 4.5L5 8.4" fill="none" stroke="#fff" stroke-width="1.3"/></svg><span class="sx" style="transform:scaleX(0.9392);margin:0 -2.73px">Zurück zum Start</span></p></div>
<div style="left:7px;top:0px;width:1446px;height:8px;background:linear-gradient(#e9e9e9,#f2f2f2);"></div>
<div style="left:7px;top:8px;width:1446px;height:1px;background:#b4b4b4;"></div>
<div style="left:7px;top:9px;width:22px;height:686px;background:#efefef;"></div>
<div style="left:30px;top:0px;width:17px;height:8px;background:#dedede;"></div>
<div style="left:47px;top:0px;width:1px;height:8px;background:#d2d2d2;"></div>
<div style="left:95px;top:0px;width:1px;height:8px;background:#d2d2d2;"></div>
<div style="left:239px;top:0px;width:1px;height:8px;background:#d2d2d2;"></div>
<div style="left:317px;top:0px;width:1px;height:8px;background:#d2d2d2;"></div>
<div style="left:395px;top:0px;width:1px;height:8px;background:#d2d2d2;"></div>
<div style="left:473px;top:0px;width:1px;height:8px;background:#d2d2d2;"></div>
<div style="left:551px;top:0px;width:1px;height:8px;background:#d2d2d2;"></div>
<div style="left:629px;top:0px;width:1px;height:8px;background:#d2d2d2;"></div>
<div style="left:707px;top:0px;width:1px;height:8px;background:#d2d2d2;"></div>
<div style="left:785px;top:0px;width:1px;height:8px;background:#d2d2d2;"></div>
<div style="left:863px;top:0px;width:1px;height:8px;background:#d2d2d2;"></div>
<div style="left:941px;top:0px;width:1px;height:8px;background:#d2d2d2;"></div>
<div style="left:1019px;top:0px;width:1px;height:8px;background:#d2d2d2;"></div>
<div style="left:1097px;top:0px;width:1px;height:8px;background:#d2d2d2;"></div>
<div style="left:1175px;top:0px;width:1px;height:8px;background:#d2d2d2;"></div>
<div style="left:1235px;top:0px;width:1px;height:8px;background:#d2d2d2;"></div>
<div style="left:1289px;top:0px;width:1px;height:8px;background:#d2d2d2;"></div>
<div style="left:1343px;top:0px;width:1px;height:8px;background:#d2d2d2;"></div>
<div style="left:1397px;top:0px;width:1px;height:8px;background:#d2d2d2;"></div>
<div style="left:1451px;top:0px;width:1px;height:8px;background:#d2d2d2;"></div>
<div style="left:7px;top:0;width:1446px;height:8px;overflow:hidden;background:none">
<svg style="position:absolute;left:28px;top:0" width="10" height="6" viewBox="0 0 10 6"><path d="M1.2 4.2L2.6 0M8.6 4.2L7.2 0M2.2 0.8H7.6" fill="none" stroke="#217346" stroke-width="1.15"/></svg>
<div class="cl" style="left:41px;width:47px;color:#444">B</div>
<div class="cl" style="left:90px;width:142px;color:#444">C</div>
<div class="cl" style="left:233px;width:77px;color:#444">D</div>
<div class="cl" style="left:311px;width:77px;color:#444">E</div>
<div class="cl" style="left:389px;width:77px;color:#444">F</div>
<div class="cl" style="left:467px;width:77px;color:#444">G</div>
<div class="cl" style="left:545px;width:77px;color:#444">H</div>
<div class="cl" style="left:623px;width:77px;color:#444">I</div>
<div class="cl" style="left:701px;width:77px;color:#444">J</div>
<div class="cl" style="left:779px;width:77px;color:#444">K</div>
<div class="cl" style="left:857px;width:77px;color:#444">L</div>
<div class="cl" style="left:935px;width:77px;color:#444">M</div>
<div class="cl" style="left:1013px;width:77px;color:#444">N</div>
<div class="cl" style="left:1091px;width:77px;color:#444">O</div>
<div class="cl" style="left:1169px;width:59px;color:#444">P</div>
<div class="cl" style="left:1229px;width:53px;color:#444">Q</div>
<div class="cl" style="left:1283px;width:53px;color:#444">R</div>
<div class="cl" style="left:1337px;width:53px;color:#444">S</div>
<div class="cl" style="left:1391px;width:53px;color:#444">T</div>
</div>
<svg style="position:absolute;left:18px;top:0" width="9" height="6"><path d="M8 0 L8 5 L0.5 5 Z" fill="#dadada"/></svg>
<div style="left:7px;top:9px;width:22px;height:3px;background:#e0e0e0;"></div>
<div style="left:7px;top:12px;width:22px;height:1px;background:#c9c9c9;"></div>
<div style="left:7px;top:42px;width:22px;height:1px;background:#d9d9d9;"></div>
<div class="rl" style="top:28px">2</div>
<div style="left:7px;top:79px;width:22px;height:1px;background:#d9d9d9;"></div>
<div class="rl" style="top:65px">3</div>
<div style="left:7px;top:94px;width:22px;height:1px;background:#d9d9d9;"></div>
<div class="rl" style="top:80px">4</div>
<div style="left:7px;top:109px;width:22px;height:1px;background:#d9d9d9;"></div>
<div class="rl" style="top:95px">5</div>
<div style="left:7px;top:135px;width:22px;height:1px;background:#d9d9d9;"></div>
<div class="rl" style="top:121px">6</div>
<div class="rl" style="top:151px">7</div>
<div style="left:7px;top:180px;width:22px;height:1px;background:#d9d9d9;"></div>
<div class="rl" style="top:166px">8</div>
<div style="left:7px;top:195px;width:22px;height:1px;background:#d9d9d9;"></div>
<div class="rl" style="top:181px">9</div>
<div style="left:7px;top:210px;width:22px;height:1px;background:#d9d9d9;"></div>
<div class="rl" style="top:196px">10</div>
<div style="left:7px;top:225px;width:22px;height:1px;background:#d9d9d9;"></div>
<div class="rl" style="top:211px">11</div>
<div style="left:7px;top:240px;width:22px;height:1px;background:#d9d9d9;"></div>
<div class="rl" style="top:226px">12</div>
<div style="left:7px;top:255px;width:22px;height:1px;background:#d9d9d9;"></div>
<div class="rl" style="top:241px">13</div>
<div style="left:7px;top:270px;width:22px;height:1px;background:#d9d9d9;"></div>
<div class="rl" style="top:256px">14</div>
<div style="left:7px;top:285px;width:22px;height:1px;background:#d9d9d9;"></div>
<div class="rl" style="top:271px">15</div>
<div style="left:7px;top:300px;width:22px;height:1px;background:#d9d9d9;"></div>
<div class="rl" style="top:286px">16</div>
<div style="left:7px;top:315px;width:22px;height:1px;background:#d9d9d9;"></div>
<div class="rl" style="top:301px">17</div>
<div style="left:7px;top:341px;width:22px;height:1px;background:#d9d9d9;"></div>
<div class="rl" style="top:327px">18</div>
<div style="left:7px;top:371px;width:22px;height:1px;background:#d9d9d9;"></div>
<div class="rl" style="top:357px">19</div>
<div style="left:7px;top:417px;width:22px;height:1px;background:#d9d9d9;"></div>
<div class="rl" style="top:403px">20</div>
<div style="left:7px;top:432px;width:22px;height:1px;background:#d9d9d9;"></div>
<div class="rl" style="top:418px">21</div>
<div style="left:7px;top:447px;width:22px;height:1px;background:#d9d9d9;"></div>
<div class="rl" style="top:433px">22</div>
<div style="left:7px;top:462px;width:22px;height:1px;background:#d9d9d9;"></div>
<div class="rl" style="top:448px">23</div>
<div style="left:7px;top:477px;width:22px;height:1px;background:#d9d9d9;"></div>
<div class="rl" style="top:463px">24</div>
<div style="left:7px;top:492px;width:22px;height:1px;background:#d9d9d9;"></div>
<div class="rl" style="top:478px">25</div>
<div style="left:7px;top:522px;width:22px;height:1px;background:#d9d9d9;"></div>
<div class="rl" style="top:508px">26</div>
<div style="left:7px;top:537px;width:22px;height:1px;background:#d9d9d9;"></div>
<div class="rl" style="top:523px">27</div>
<div style="left:7px;top:552px;width:22px;height:1px;background:#d9d9d9;"></div>
<div class="rl" style="top:538px">28</div>
<div style="left:7px;top:567px;width:22px;height:1px;background:#d9d9d9;"></div>
<div class="rl" style="top:553px">29</div>
<div style="left:7px;top:582px;width:22px;height:1px;background:#d9d9d9;"></div>
<div class="rl" style="top:568px">30</div>
<div style="left:7px;top:597px;width:22px;height:1px;background:#d9d9d9;"></div>
<div class="rl" style="top:583px">31</div>
<div style="left:7px;top:612px;width:22px;height:1px;background:#d9d9d9;"></div>
<div class="rl" style="top:598px">32</div>
<div style="left:7px;top:627px;width:22px;height:1px;background:#d9d9d9;"></div>
<div class="rl" style="top:613px">33</div>
<div style="left:7px;top:642px;width:22px;height:1px;background:#d9d9d9;"></div>
<div class="rl" style="top:628px">34</div>
<div style="left:7px;top:657px;width:22px;height:1px;background:#d9d9d9;"></div>
<div class="rl" style="top:643px">35</div>
<div style="left:7px;top:672px;width:22px;height:1px;background:#d9d9d9;"></div>
<div class="rl" style="top:658px">36</div>
<div style="left:7px;top:687px;width:22px;height:1px;background:#d9d9d9;"></div>
<div class="rl" style="top:673px">37</div>
<div style="left:7px;top:702px;width:22px;height:1px;background:#d9d9d9;"></div>
<div class="rl" style="top:688px">38</div>
<div style="left:29px;top:0px;width:1px;height:695px;background:#a8a8a8;"></div>
<div style="left:0px;top:0px;width:7px;height:695px;background:#000;"></div>
<div style="left:7px;top:165px;width:1446px;height:2px;background:#9e9e9e;"></div>
<div style="left:95px;top:0px;width:2px;height:695px;background:#9e9e9e;"></div>
<div style="left:27px;top:6px;width:23px;height:9px;background:#217346;"></div>
<div style="left:30px;top:9px;width:12px;height:3px;background:#fff;"></div>
<div style="left:31px;top:10px;width:11px;height:1px;background:#6f7b3c;"></div>
<div style="left:43px;top:7px;width:8px;height:9px;background:#217346;"></div>
</body></html>
